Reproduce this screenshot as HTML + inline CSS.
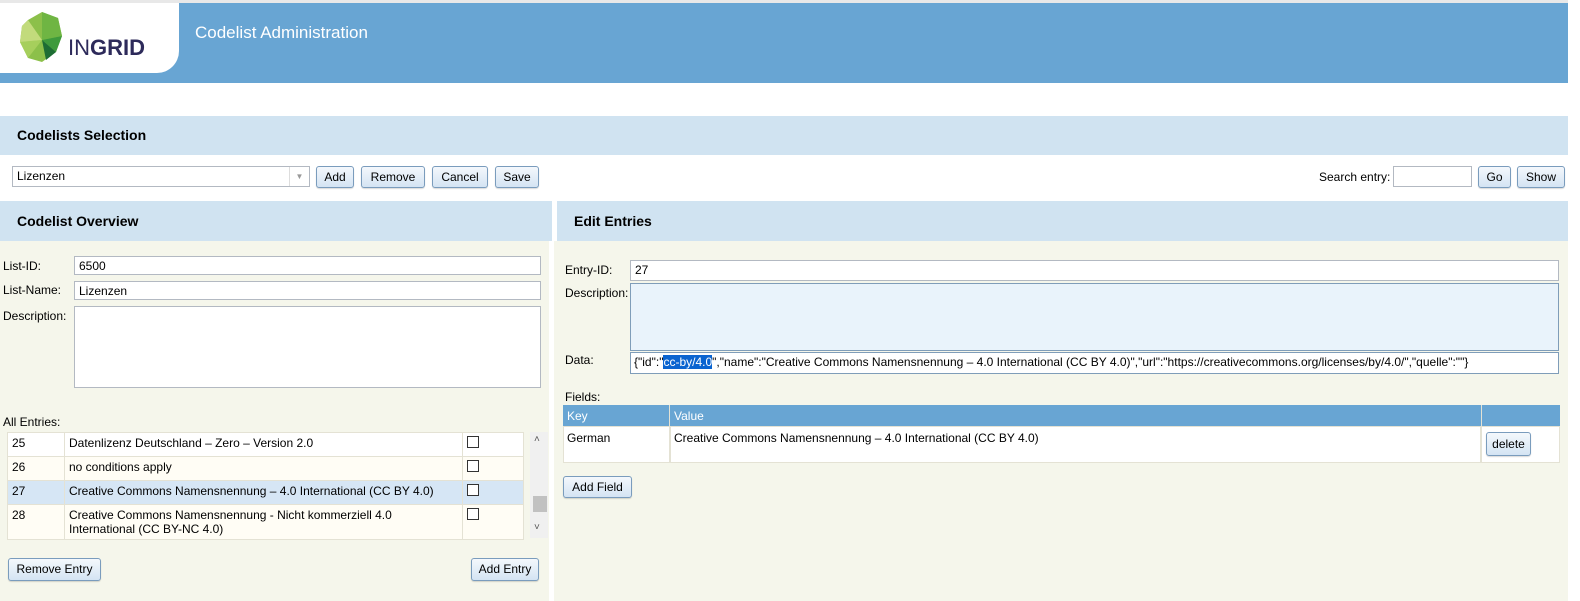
<!DOCTYPE html>
<html><head><meta charset="utf-8"><style>
*{box-sizing:border-box;margin:0;padding:0}
body{width:1580px;height:601px;overflow:hidden;background:#fff;font-family:"Liberation Sans",Arial,sans-serif;font-size:12px;color:#000;position:relative}
.a{position:absolute}
.btn{position:absolute;border:1px solid #7a9cbd;border-radius:3px;background:linear-gradient(#f4f8fc,#d4e4f3);font-size:12px;text-align:center;line-height:20px;box-shadow:0 1px 1px rgba(0,0,0,.15)}
.inp{position:absolute;background:#fff;border:1px solid #b3b9c2;font-size:12px;padding:2px 4px;line-height:14px}
.sec{position:absolute;background:#d0e3f1;font-weight:bold;font-size:14px;padding-left:17px}
.lbl{position:absolute;font-size:12px}
td{border:1px solid #e4e2d4;vertical-align:top;padding:3px 4px;font-size:12px}
.cb{display:inline-block;width:12px;height:12px;border:1px solid #333;background:#fff}
</style></head><body>
<div class="a" style="left:0;top:0;width:1580px;height:3px;background:#e8e8e8"></div>
<div class="a" style="left:0;top:3px;width:1568px;height:80px;background:#68a5d3"></div>
<div class="a" style="left:0;top:3px;width:179px;height:70px;background:#fff;border-bottom-right-radius:22px"></div>
<svg class="a" style="left:20px;top:12px" width="44" height="52" viewBox="0 0 44 52">
<polygon points="8,8 22,0 38,6 42,24 36,40 22,50 8,46 0,30 2,14" fill="#8cc04a"/>
<polygon points="22,0 38,6 42,24 22,28" fill="#6fb543"/>
<polygon points="22,28 42,24 36,40" fill="#3e9a3c"/>
<polygon points="22,28 36,40 26,48" fill="#1d6d34"/>
<polygon points="0,30 22,28 8,46" fill="#a6cf5c"/>
<polygon points="2,14 8,8 22,28 0,30" fill="#c2db7c"/>
</svg>
<div class="a" style="left:68px;top:35px;font-size:22px;color:#2d2a5a;letter-spacing:0px"><span>IN</span><b>GRID</b></div>
<div class="a" style="left:195px;top:23px;font-size:17px;color:#fff">Codelist Administration</div>

<div class="sec" style="left:0;top:116px;width:1568px;height:39px;line-height:39px">Codelists Selection</div>
<div class="inp" style="left:12px;top:166px;width:298px;height:21px">Lizenzen</div>
<div class="a" style="left:289px;top:167px;width:20px;height:19px;border-left:1px solid #ddd;color:#999;font-size:8px;text-align:center;line-height:19px">▼</div>
<div class="btn" style="left:316px;top:166px;width:38px;height:22px">Add</div>
<div class="btn" style="left:361px;top:166px;width:64px;height:22px">Remove</div>
<div class="btn" style="left:432px;top:166px;width:56px;height:22px">Cancel</div>
<div class="btn" style="left:495px;top:166px;width:44px;height:22px">Save</div>
<div class="lbl" style="left:1319px;top:170px">Search entry:</div>
<div class="inp" style="left:1393px;top:166px;width:79px;height:21px"></div>
<div class="btn" style="left:1478px;top:166px;width:33px;height:22px">Go</div>
<div class="btn" style="left:1517px;top:166px;width:48px;height:22px">Show</div>

<div class="sec" style="left:0;top:201px;width:552px;height:40px;line-height:40px">Codelist Overview</div>
<div class="a" style="left:0;top:241px;width:549px;height:360px;background:#f5f6eb"></div>
<div class="lbl" style="left:3px;top:259px">List-ID:</div>
<div class="inp" style="left:74px;top:256px;width:467px;height:19px">6500</div>
<div class="lbl" style="left:3px;top:283px">List-Name:</div>
<div class="inp" style="left:74px;top:281px;width:467px;height:19px">Lizenzen</div>
<div class="lbl" style="left:3px;top:309px">Description:</div>
<div class="inp" style="left:74px;top:306px;width:467px;height:82px"></div>
<div class="lbl" style="left:3px;top:415px">All Entries:</div>
<table class="a" style="left:7px;top:432px;width:517px;border-collapse:collapse;background:#fffdf5">
<tr style="background:#fff;height:24px"><td style="width:57px">25</td><td style="width:398px">Datenlizenz Deutschland – Zero – Version 2.0</td><td><span class="cb"></span></td></tr>
<tr style="height:24px"><td>26</td><td>no conditions apply</td><td><span class="cb"></span></td></tr>
<tr style="background:#d6e6f5;height:24px"><td>27</td><td>Creative Commons Namensnennung – 4.0 International (CC BY 4.0)</td><td><span class="cb"></span></td></tr>
<tr style="height:34px"><td>28</td><td>Creative Commons Namensnennung - Nicht kommerziell 4.0 International (CC BY-NC 4.0)</td><td><span class="cb"></span></td></tr>
</table>
<div class="a" style="left:530px;top:432px;width:18px;height:106px;background:#f0f0f0"></div>
<div class="a" style="left:533px;top:496px;width:14px;height:16px;background:#c1c1c1"></div>
<div class="a" style="left:534px;top:434px;font-size:10px;color:#555">˄</div>
<div class="a" style="left:534px;top:522px;font-size:10px;color:#555">˅</div>
<div class="btn" style="left:8px;top:558px;width:93px;height:23px">Remove Entry</div>
<div class="btn" style="left:471px;top:558px;width:68px;height:23px">Add Entry</div>

<div class="sec" style="left:557px;top:201px;width:1011px;height:40px;line-height:40px">Edit Entries</div>
<div class="a" style="left:554px;top:241px;width:1014px;height:360px;background:#f5f6eb"></div>
<div class="lbl" style="left:565px;top:263px">Entry-ID:</div>
<div class="inp" style="left:630px;top:260px;width:929px;height:21px">27</div>
<div class="lbl" style="left:565px;top:286px">Description:</div>
<div class="inp" style="left:630px;top:283px;width:929px;height:68px;background:#e9f3fb;border-color:#7f9db9"></div>
<div class="lbl" style="left:565px;top:353px">Data:</div>
<div class="inp" style="left:630px;top:352px;width:929px;height:22px;border-color:#7f9db9;white-space:nowrap;overflow:hidden;padding-left:3px">{"id":"<span style="background:#0a64d0;color:#fff">cc-by/4.0</span>","name":"Creative Commons Namensnennung – 4.0 International (CC BY 4.0)","url":"https://creativecommons.org/licenses/by/4.0/","quelle":""}</div>
<div class="lbl" style="left:565px;top:390px">Fields:</div>
<div class="a" style="left:563px;top:405px;width:997px;height:21px;background:#68a5d3;color:#fff"></div>
<div class="a" style="left:669px;top:405px;width:1px;height:21px;background:#e4e2d4"></div>
<div class="a" style="left:1481px;top:405px;width:1px;height:21px;background:#e4e2d4"></div>
<div class="a" style="left:567px;top:409px;color:#fff">Key</div>
<div class="a" style="left:674px;top:409px;color:#fff">Value</div>
<div class="a" style="left:563px;top:426px;width:997px;height:37px;background:#fff;border:1px solid #e4e2d4"></div>
<div class="a" style="left:669px;top:426px;width:2px;height:37px;background:#e4e2d4"></div>
<div class="a" style="left:1480px;top:426px;width:2px;height:37px;background:#e4e2d4"></div>
<div class="a" style="left:567px;top:431px">German</div>
<div class="a" style="left:674px;top:431px">Creative Commons Namensnennung – 4.0 International (CC BY 4.0)</div>
<div class="btn" style="left:1486px;top:432px;width:45px;height:24px;line-height:22px">delete</div>
<div class="btn" style="left:563px;top:476px;width:69px;height:22px">Add Field</div>
<div class="a" style="left:1568px;top:0;width:12px;height:601px;background:#fff"></div>
</body></html>
